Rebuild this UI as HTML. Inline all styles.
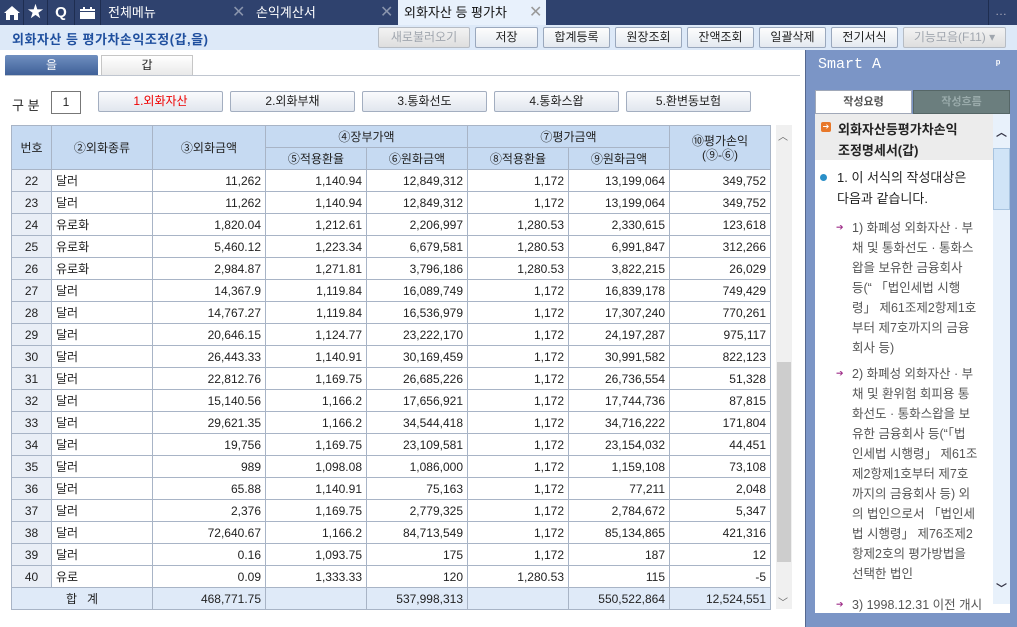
<!DOCTYPE html>
<html><head><meta charset="utf-8"><style>
*{margin:0;padding:0;box-sizing:border-box}
body{width:1017px;height:627px;overflow:hidden;background:#fff;font-family:"Liberation Sans","Noto Sans CJK KR","NanumGothic",sans-serif;font-size:12px;color:#222;position:relative}
.a{position:absolute}
.top{left:0;top:0;width:1017px;height:25px;background:#2f426e}
.ic{top:0;height:25px;width:24px;border-right:1px solid #1e2d50;color:#fff;text-align:center;line-height:25px;font-weight:bold;font-size:15px}
.tab{top:0;height:25px;line-height:25px;color:#fff;font-size:13px}
.x{color:#8a95ad;font-size:16px;top:0;line-height:25px}
.tb{left:0;top:25px;width:1017px;height:25px;background:#dde9f8}
.btn{top:27px;height:21px;border:1px solid #9aa8bd;border-radius:2px;background:linear-gradient(#fdfdfd,#e4e9f0);text-align:center;line-height:19px;font-size:12px;color:#222}
.dis{color:#a0a6ae;background:linear-gradient(#f3f3f3,#dedede);border-color:#b6bcc4}
.b2{top:91px;height:21px;border:1px solid #a3aec0;border-radius:2px;background:linear-gradient(#fafbfd,#e1e6ee);text-align:center;line-height:19px;font-size:12px}
table{border-collapse:collapse;table-layout:fixed;position:absolute;left:11px;top:125px}
td{border:1px solid #a8b4c6;height:22px;font-size:12px;padding:0 4px;white-space:nowrap;overflow:hidden}
td.r{text-align:right}
td.n{text-align:center;background:#e9eef6}
th{border:1px solid #a8b4c6;background:#c6daf2;font-weight:normal;height:22px;font-size:12px}
tr.tot td{background:#dfeaf8}
.sp{left:805px;top:50px;width:212px;height:577px;background:#7b95c6;border-left:1px solid #55688f}
.pi{color:#555;font-size:12.5px;line-height:20px;white-space:nowrap}
</style></head><body>
<div class="a top"></div>
<div class="a ic" style="left:0">
<svg width="16" height="14" viewBox="0 0 16 14" style="margin-top:6px"><path d="M8 0L0 7h2v7h4V9h4v5h4V7h2z" fill="#fff"/></svg></div>
<div class="a ic" style="left:24px;font-size:16px">★</div>
<div class="a ic" style="left:48px;width:27px">Q</div>
<div class="a ic" style="left:75px;width:26px"><svg width="15" height="12" viewBox="0 0 15 12" style="margin-top:7px"><rect x="0" y="2" width="15" height="10" fill="#fff"/><rect x="3" y="0" width="2" height="4" fill="#fff"/><rect x="10" y="0" width="2" height="4" fill="#fff"/><rect x="0" y="4" width="15" height="1" fill="#2f426e"/></svg></div>
<div class="a tab" style="left:108px">전체메뉴</div>
<div class="a x" style="left:232px">✕</div>
<div class="a tab" style="left:256px">손익계산서</div>
<div class="a x" style="left:380px">✕</div>
<div class="a" style="left:398px;top:0;width:148px;height:25px;background:#e8f1fc"></div>
<div class="a tab" style="left:404px;color:#111">외화자산 등 평가차</div>
<div class="a x" style="left:529px;color:#999">✕</div>
<div class="a" style="left:988px;top:0;width:1px;height:25px;background:#1e2d50"></div>
<div class="a" style="left:995px;top:4px;color:#aab;font-size:12px">…</div>
<div class="a tb"></div>
<div class="a" style="left:12px;top:29px;font-weight:bold;color:#1f4f9e;font-size:13px;letter-spacing:0.5px">외화자산 등 평가차손익조정(갑,을)</div>
<div class="a btn dis" style="left:378px;width:92px">새로불러오기</div>
<div class="a btn" style="left:475px;width:63px">저장</div>
<div class="a btn" style="left:543px;width:67px">합계등록</div>
<div class="a btn" style="left:615px;width:67px">원장조회</div>
<div class="a btn" style="left:687px;width:67px">잔액조회</div>
<div class="a btn" style="left:759px;width:67px">일괄삭제</div>
<div class="a btn" style="left:831px;width:67px">전기서식</div>
<div class="a btn dis" style="left:903px;width:103px">기능모음(F11) ▾</div>
<div class="a" style="left:5px;top:55px;width:93px;height:21px;background:linear-gradient(#6f8fc0,#3d5e96);color:#fff;text-align:center;line-height:20px;border-radius:2px 2px 0 0">을</div>
<div class="a" style="left:101px;top:55px;width:92px;height:21px;background:linear-gradient(#fff,#e9e9e9);border:1px solid #c6c6c6;text-align:center;line-height:19px">갑</div>
<div class="a" style="left:5px;top:75px;width:795px;height:1px;background:#c0c6d0"></div>
<div class="a" style="left:12px;top:95px;font-size:13px">구 분</div>
<div class="a" style="left:51px;top:91px;width:30px;height:23px;border:1px solid #777;text-align:center;line-height:21px">1</div>
<div class="a b2" style="left:98px;width:125px;color:#e00">1.외화자산</div>
<div class="a b2" style="left:230px;width:125px">2.외화부채</div>
<div class="a b2" style="left:362px;width:125px">3.통화선도</div>
<div class="a b2" style="left:494px;width:125px">4.통화스왑</div>
<div class="a b2" style="left:626px;width:125px">5.환변동보험</div>
<table>
<colgroup><col style="width:40px"><col style="width:101px"><col style="width:113px"><col style="width:101px"><col style="width:101px"><col style="width:101px"><col style="width:101px"><col style="width:101px"></colgroup>
<tr><th rowspan="2">번호</th><th rowspan="2">②외화종류</th><th rowspan="2">③외화금액</th><th colspan="2">④장부가액</th><th colspan="2">⑦평가금액</th><th rowspan="2" style="line-height:14px">⑩평가손익<br>(⑨-⑥)</th></tr>
<tr><th>⑤적용환율</th><th>⑥원화금액</th><th>⑧적용환율</th><th>⑨원화금액</th></tr>
<tr><td class="n">22</td><td>달러</td><td class="r">11,262</td><td class="r">1,140.94</td><td class="r">12,849,312</td><td class="r">1,172</td><td class="r">13,199,064</td><td class="r">349,752</td></tr>
<tr><td class="n">23</td><td>달러</td><td class="r">11,262</td><td class="r">1,140.94</td><td class="r">12,849,312</td><td class="r">1,172</td><td class="r">13,199,064</td><td class="r">349,752</td></tr>
<tr><td class="n">24</td><td>유로화</td><td class="r">1,820.04</td><td class="r">1,212.61</td><td class="r">2,206,997</td><td class="r">1,280.53</td><td class="r">2,330,615</td><td class="r">123,618</td></tr>
<tr><td class="n">25</td><td>유로화</td><td class="r">5,460.12</td><td class="r">1,223.34</td><td class="r">6,679,581</td><td class="r">1,280.53</td><td class="r">6,991,847</td><td class="r">312,266</td></tr>
<tr><td class="n">26</td><td>유로화</td><td class="r">2,984.87</td><td class="r">1,271.81</td><td class="r">3,796,186</td><td class="r">1,280.53</td><td class="r">3,822,215</td><td class="r">26,029</td></tr>
<tr><td class="n">27</td><td>달러</td><td class="r">14,367.9</td><td class="r">1,119.84</td><td class="r">16,089,749</td><td class="r">1,172</td><td class="r">16,839,178</td><td class="r">749,429</td></tr>
<tr><td class="n">28</td><td>달러</td><td class="r">14,767.27</td><td class="r">1,119.84</td><td class="r">16,536,979</td><td class="r">1,172</td><td class="r">17,307,240</td><td class="r">770,261</td></tr>
<tr><td class="n">29</td><td>달러</td><td class="r">20,646.15</td><td class="r">1,124.77</td><td class="r">23,222,170</td><td class="r">1,172</td><td class="r">24,197,287</td><td class="r">975,117</td></tr>
<tr><td class="n">30</td><td>달러</td><td class="r">26,443.33</td><td class="r">1,140.91</td><td class="r">30,169,459</td><td class="r">1,172</td><td class="r">30,991,582</td><td class="r">822,123</td></tr>
<tr><td class="n">31</td><td>달러</td><td class="r">22,812.76</td><td class="r">1,169.75</td><td class="r">26,685,226</td><td class="r">1,172</td><td class="r">26,736,554</td><td class="r">51,328</td></tr>
<tr><td class="n">32</td><td>달러</td><td class="r">15,140.56</td><td class="r">1,166.2</td><td class="r">17,656,921</td><td class="r">1,172</td><td class="r">17,744,736</td><td class="r">87,815</td></tr>
<tr><td class="n">33</td><td>달러</td><td class="r">29,621.35</td><td class="r">1,166.2</td><td class="r">34,544,418</td><td class="r">1,172</td><td class="r">34,716,222</td><td class="r">171,804</td></tr>
<tr><td class="n">34</td><td>달러</td><td class="r">19,756</td><td class="r">1,169.75</td><td class="r">23,109,581</td><td class="r">1,172</td><td class="r">23,154,032</td><td class="r">44,451</td></tr>
<tr><td class="n">35</td><td>달러</td><td class="r">989</td><td class="r">1,098.08</td><td class="r">1,086,000</td><td class="r">1,172</td><td class="r">1,159,108</td><td class="r">73,108</td></tr>
<tr><td class="n">36</td><td>달러</td><td class="r">65.88</td><td class="r">1,140.91</td><td class="r">75,163</td><td class="r">1,172</td><td class="r">77,211</td><td class="r">2,048</td></tr>
<tr><td class="n">37</td><td>달러</td><td class="r">2,376</td><td class="r">1,169.75</td><td class="r">2,779,325</td><td class="r">1,172</td><td class="r">2,784,672</td><td class="r">5,347</td></tr>
<tr><td class="n">38</td><td>달러</td><td class="r">72,640.67</td><td class="r">1,166.2</td><td class="r">84,713,549</td><td class="r">1,172</td><td class="r">85,134,865</td><td class="r">421,316</td></tr>
<tr><td class="n">39</td><td>달러</td><td class="r">0.16</td><td class="r">1,093.75</td><td class="r">175</td><td class="r">1,172</td><td class="r">187</td><td class="r">12</td></tr>
<tr><td class="n">40</td><td>유로</td><td class="r">0.09</td><td class="r">1,333.33</td><td class="r">120</td><td class="r">1,280.53</td><td class="r">115</td><td class="r">-5</td></tr>
<tr class="tot"><td colspan="2" style="text-align:center">합&nbsp;&nbsp;&nbsp;계</td><td class="r">468,771.75</td><td></td><td class="r">537,998,313</td><td></td><td class="r">550,522,864</td><td class="r">12,524,551</td></tr>
</table>
<div class="a" style="left:776px;top:125px;width:16px;height:484px;background:#f0f0f0"></div>
<div class="a" style="left:777px;top:362px;width:14px;height:200px;background:#cdcdcd"></div>
<div class="a" style="left:778px;top:128px;color:#666;font-size:10px">︿</div>
<div class="a" style="left:778px;top:594px;color:#666;font-size:10px">﹀</div>
<div class="a sp"></div>
<div class="a" style="left:818px;top:56px;color:#fff;font-family:'Liberation Mono',monospace;font-size:15px">Smart A</div>
<div class="a" style="left:996px;top:58px;color:#fff;font-size:11px;font-weight:bold">ᵖ</div>
<div class="a" style="left:815px;top:90px;width:97px;height:24px;background:#fff;border:1px solid #a0a8b8;text-align:center;line-height:22px;font-size:11px;color:#555;font-weight:bold">작성요령</div>
<div class="a" style="left:913px;top:90px;width:97px;height:24px;background:#6b7e7e;border:1px solid #566;text-align:center;line-height:22px;font-size:11px;color:#9aa;font-weight:bold">작성흐름</div>
<div class="a" style="left:815px;top:114px;width:195px;height:513px;background:#fff"></div>
<div class="a" style="left:815px;top:114px;width:178px;height:46px;background:#ececec"></div>
<div class="a" style="left:993px;top:114px;width:17px;height:490px;background:#e8f1fb"></div>
<div class="a" style="left:993px;top:148px;width:17px;height:62px;background:#d0e4f7;border:1px solid #a8c4e0"></div>
<div class="a" style="left:996px;top:124px;color:#334;font-size:11px;font-weight:bold">︿</div>
<div class="a" style="left:996px;top:580px;color:#334;font-size:11px;font-weight:bold">﹀</div>
<div class="a" style="left:821px;top:122px;width:10px;height:10px;background:#e8782a;border-radius:2px;color:#fff;font-size:8px;line-height:10px;text-align:center">➔</div>
<div class="a" style="left:838px;top:119px;font-weight:bold;font-size:13px;line-height:21px;color:#222">외화자산등평가차손익<br>조정명세서(갑)</div>
<div class="a" style="left:820px;top:174px;width:7px;height:7px;border-radius:50%;background:#2a8fc8"></div>
<div class="a" style="left:837px;top:167px;font-size:13px;line-height:21px;color:#222">1. 이 서식의 작성대상은<br>다음과 같습니다.</div>
<div class="a" style="left:836px;top:222px;color:#a0308a;font-size:9px">➔</div>
<div class="a pi" style="left:852px;top:218px">1) 화폐성 외화자산 · 부<br>채 및 통화선도 · 통화스<br>왑을 보유한 금융회사<br>등(“ 「법인세법 시행<br>령」 제61조제2항제1호<br>부터 제7호까지의 금융<br>회사 등)</div>
<div class="a" style="left:836px;top:368px;color:#a0308a;font-size:9px">➔</div>
<div class="a pi" style="left:852px;top:364px">2) 화폐성 외화자산 · 부<br>채 및 환위험 회피용 통<br>화선도 · 통화스왑을 보<br>유한 금융회사 등(“「법<br>인세법 시행령」 제61조<br>제2항제1호부터 제7호<br>까지의 금융회사 등) 외<br>의 법인으로서 「법인세<br>법 시행령」 제76조제2<br>항제2호의 평가방법을<br>선택한 법인</div>
<div class="a" style="left:836px;top:599px;color:#a0308a;font-size:9px">➔</div>
<div class="a pi" style="left:852px;top:595px">3) 1998.12.31 이전 개시</div>
<div class="a" style="left:815px;top:613px;width:195px;height:14px;background:#7b95c6"></div>
</body></html>
